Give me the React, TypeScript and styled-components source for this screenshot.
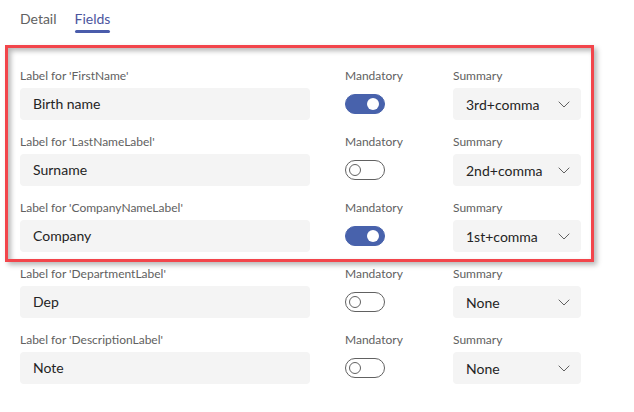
import React from "react";
import styled, { createGlobalStyle } from "styled-components";

const Global = createGlobalStyle`
  html, body { margin: 0; padding: 0; background: #ffffff; }
  body { font-family: "Segoe UI", "Lato", "Noto Sans", sans-serif; color: #242424; }
  * { box-sizing: border-box; }
`;

const Page = styled.div`
  position: relative;
  width: 634px;
  height: 412px;
  overflow: hidden;
  background: #fff;
`;

const TabBar = styled.div`
  display: flex;
  align-items: flex-start;
  gap: 18px;
  padding: 9px 0 0 20px;
  height: 50px;
`;

const Tab = styled.div<{ $active?: boolean }>`
  position: relative;
  font-size: 14px;
  line-height: 20px;
  height: 24px;
  color: ${(p) => (p.$active ? "#4b559e" : "#616161")};
  &::after {
    content: "";
    display: ${(p) => (p.$active ? "block" : "none")};
    position: absolute;
    left: 0;
    right: 0;
    top: 21px;
    height: 3px;
    border-radius: 2px;
    background: #4a5cab;
  }
`;

const List = styled.div`
  display: flex;
  flex-direction: column;
  gap: 14px;
  padding: 18px 0 0 20px;
`;

const Row = styled.div`
  display: grid;
  grid-template-columns: 325px 108px 128px;
  grid-template-rows: 16px 32px;
  row-gap: 4px;
  align-items: center;
`;

const Caption = styled.div`
  font-size: 12px;
  line-height: 16px;
  color: #616161;
  white-space: nowrap;
`;

const TextBox = styled.div`
  width: 290px;
  height: 32px;
  border-radius: 4px;
  background: #f4f4f4;
  font-size: 14px;
  line-height: 32px;
  padding-left: 13px;
  color: #242424;
`;

const ToggleTrack = styled.div<{ $on: boolean }>`
  position: relative;
  width: 40px;
  height: 20px;
  border-radius: 10px;
  background: ${(p) => (p.$on ? "#4862ac" : "#ffffff")};
  border: 1px solid ${(p) => (p.$on ? "#4862ac" : "#616161")};
`;

const Knob = styled.div<{ $on: boolean }>`
  position: absolute;
  top: 3px;
  left: ${(p) => (p.$on ? "21px" : "3px")};
  width: 12px;
  height: 12px;
  border-radius: 50%;
  background: ${(p) => (p.$on ? "#ffffff" : "transparent")};
  border: ${(p) => (p.$on ? "none" : "1px solid #616161")};
`;

const Select = styled.div`
  display: flex;
  align-items: center;
  justify-content: space-between;
  width: 128px;
  height: 32px;
  border-radius: 4px;
  background: #f4f4f4;
  padding: 0 11px 0 13px;
  font-size: 14px;
  color: #242424;
`;

const Highlight = styled.div`
  position: absolute;
  left: 5px;
  top: 45px;
  width: 589px;
  height: 217px;
  border: 3px solid #f2454b;
  box-shadow: 3px 3px 5px rgba(0, 0, 0, 0.28), inset 3px 3px 5px rgba(0, 0, 0, 0.28);
  pointer-events: none;
`;

const Chevron = () => (
  <svg width="12" height="7" viewBox="0 0 12 7" fill="none">
    <path d="M0.7 0.7 L6 6 L11.3 0.7" stroke="#616161" strokeWidth="1" />
  </svg>
);

const rows = [
  { label: "Label for 'FirstName'", value: "Birth name", on: true, summary: "3rd+comma" },
  { label: "Label for 'LastNameLabel'", value: "Surname", on: false, summary: "2nd+comma" },
  { label: "Label for 'CompanyNameLabel'", value: "Company", on: true, summary: "1st+comma" },
  { label: "Label for 'DepartmentLabel'", value: "Dep", on: false, summary: "None" },
  { label: "Label for 'DescriptionLabel'", value: "Note", on: false, summary: "None" },
];

export default function App() {
  return (
    <Page>
      <Global />
      <TabBar>
        <Tab>Detail</Tab>
        <Tab $active>Fields</Tab>
      </TabBar>
      <List>
        {rows.map((r) => (
          <Row key={r.label}>
            <Caption>{r.label}</Caption>
            <Caption>Mandatory</Caption>
            <Caption>Summary</Caption>
            <TextBox>{r.value}</TextBox>
            <ToggleTrack $on={r.on}>
              <Knob $on={r.on} />
            </ToggleTrack>
            <Select>
              <span>{r.summary}</span>
              <Chevron />
            </Select>
          </Row>
        ))}
      </List>
      <Highlight />
    </Page>
  );
}
